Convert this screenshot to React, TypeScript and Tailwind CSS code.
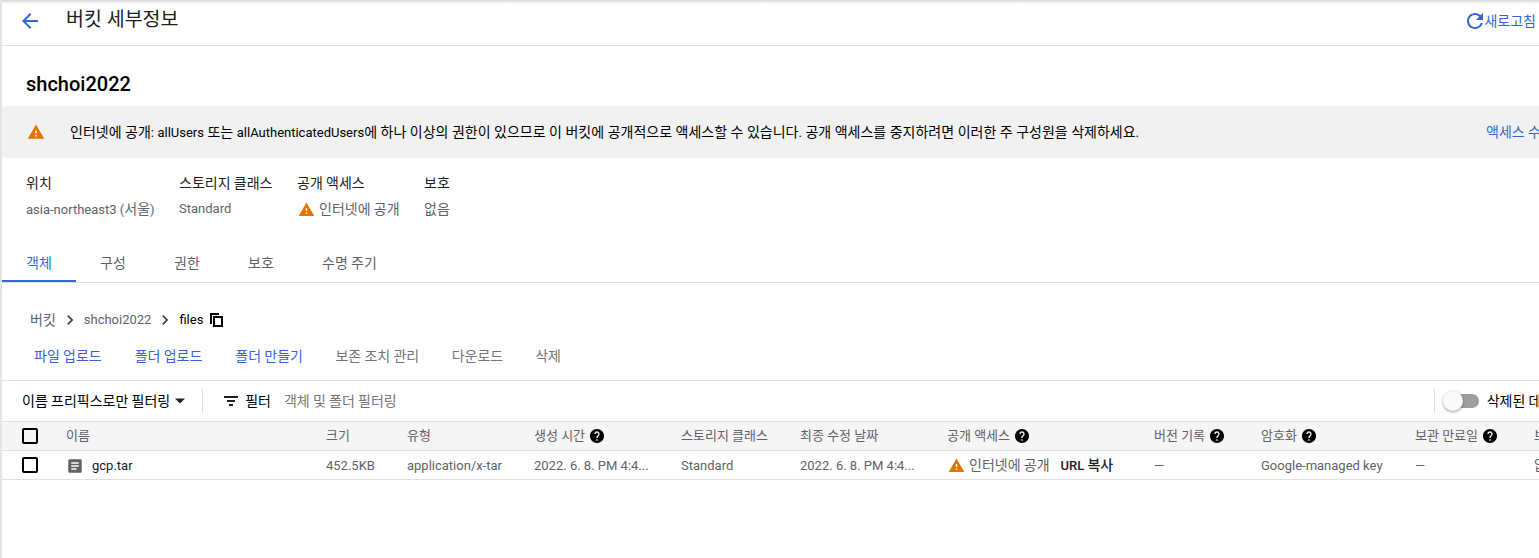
import type { ReactNode } from "react";

function T({ children }: { children: string }) {
  const parts = children.split(/([\uAC00-\uD7A3]+)/);
  return (
    <>
      {parts.map((p, i) => (i % 2 === 1 ? <span key={i} className="text-[14px]">{p}</span> : p))}
    </>
  );
}
function Warn({ size = 18 }: { size?: number }) {
  return (
    <svg width={size} height={size} viewBox="0 0 24 24" className="shrink-0">
      <path d="M1 21h22L12 2 1 21z" fill="#e37400" />
      <path d="M13 18h-2v-2h2v2zm0-4h-2v-4h2v4z" fill="#fff" />
    </svg>
  );
}
function Help() {
  return (
    <svg width="16" height="16" viewBox="0 0 24 24" className="shrink-0">
      <path d="M12 1.500C6.200 1.500 1.500 6.200 1.500 12S6.200 22.500 12 22.500 22.500 17.800 22.500 12 17.800 1.500 12 1.500zm1 17.500h-2v-2h2v2zm2.100-7.700-.9.900c-.8.800-1.200 1.400-1.200 2.800h-2v-.5c0-1.100.4-2.100 1.200-2.800l1.200-1.300c.4-.3.600-.8.600-1.400 0-1.100-.9-2-2-2s-2 .9-2 2H8c0-2.200 1.800-4 4-4s4 1.800 4 4c0 .9-.4 1.700-.9 2.300z" fill="#000" />
    </svg>
  );
}
function Chevron() {
  return (
    <svg width="20" height="20" viewBox="0 0 24 24" className="shrink-0">
      <path d="M8.600 16.600 13.200 12 8.600 7.400 10 6l6 6-6 6z" fill="#3c4043" />
    </svg>
  );
}
function Check() {
  return <span className="block w-[16px] h-[16px] border-2 border-black rounded-[2px] box-border" />;
}
function Info({ label, children, className }: { label: string; children: ReactNode; className: string }) {
  return (
    <div className={className}>
      <div className="leading-[18px] text-[#202124]"><T>{label}</T></div>
      <div className="mt-[7px] leading-[18px] text-[#5f6368] flex items-center">{children}</div>
    </div>
  );
}
export default function App() {
  return (
    <div className="relative w-[1539px] h-[558px] overflow-hidden bg-white border-l-2 border-[#e4e4e4] text-[13px] text-[#202124] font-['Roboto','Noto_Sans_CJK_KR',sans-serif]">
      <div className="absolute left-0 right-0 top-0 h-[4px] bg-gradient-to-b from-[#d8d8d8] to-white" />
      <header className="h-[46px] border-b border-[#e0e0e0] flex items-center pr-[3px]">
        <svg width="24" height="24" viewBox="0 0 24 24" className="ml-[16px] mt-[-3px]">
          <path d="M20 11H7.830l5.590-5.590L12 4l-8 8 8 8 1.410-1.410L7.830 13H20v-2z" fill="#3367d6" />
        </svg>
        <h1 className="ml-[24px] mt-[-6px] text-[19.5px] text-[#202124] font-normal">버킷 세부정보</h1>
        <button className="ml-auto flex items-center text-[#3367d6] mt-[-3px]">
          <svg width="20" height="20" viewBox="2 2 20 20">
            <path d="M17.650 6.350A7.958 7.958 0 0 0 12 4c-4.420 0-7.990 3.580-7.990 8s3.570 8 7.990 8c3.730 0 6.840-2.550 7.730-6h-2.080A5.990 5.990 0 0 1 12 18c-3.310 0-6-2.690-6-6s2.690-6 6-6c1.660 0 3.140.69 4.220 1.780L13 11h7V4l-2.350 2.350z" fill="#3367d6" />
          </svg>
          <span className="ml-[-1px]"><T>새로고침</T></span>
        </button>
      </header>
      <div className="h-[60px] pl-[24px] flex items-center pt-[15px]">
        <h2 className="text-[20px] font-medium text-[#000]">shchoi2022</h2>
      </div>
      <div className="h-[52px] bg-[#f1f1f1] rounded-l-[4px] flex items-center pl-[25px] text-[#000] whitespace-nowrap">
        <Warn />
        <span className="ml-[25px] [word-spacing:0.27px]"><T>인터넷에 공개: allUsers 또는 allAuthenticatedUsers에 하나 이상의 권한이 있으므로 이 버킷에 공개적으로 액세스할 수 있습니다. 공개 액세스를 중지하려면 이러한 주 구성원을 삭제하세요.</T></span>
        <a className="ml-auto shrink-0 w-[53px] overflow-hidden text-[#3367d6]"><T>액세스 수정</T></a>
      </div>
      <div className="flex pl-[24px] pt-[16px] h-[82px] whitespace-nowrap">
        <Info label="위치" className="w-[153px]"><span><T>asia-northeast3 (서울)</T></span></Info>
        <Info label="스토리지 클래스" className="w-[118px]">Standard</Info>
        <Info label="공개 액세스" className="w-[127px]">
          <span className="ml-[1px]"><Warn size={17} /></span><span className="ml-[4px]"><T>인터넷에 공개</T></span>
        </Info>
        <Info label="보호" className="w-[60px]"><T>없음</T></Info>
      </div>
      <nav className="h-[43px] border-b border-[#e0e0e0] flex text-[#5f6368]">
        {["객체", "구성", "권한", "보호", "수명 주기"].map((t, i) => (
          <div key={t} className={`flex items-center justify-center h-[42px] ${i === 4 ? "px-[24px]" : "w-[74px]"} ${i === 0 ? "text-[#3367d6] border-b-2 border-[#3367d6] pt-[6px]" : "pt-[4px]"}`}><span><T>{t}</T></span></div>
        ))}
      </nav>
      <div className="h-[37px] mt-[18px] flex items-center pl-[28px] pt-[1px] text-[#5f6368]">
        <T>버킷</T>
        <span className="mx-[4px]"><Chevron /></span>
        <span>shchoi2022</span>
        <span className="mx-[4px]"><Chevron /></span>
        <span className="text-[#000]">files</span>
        <svg width="13" height="14" viewBox="0 0 13 14" className="ml-[7px]">
          <path d="M1 11V1h8" fill="none" stroke="#000" strokeWidth="2" />
          <rect x="4" y="4" width="8" height="9" fill="none" stroke="#000" strokeWidth="2" />
        </svg>
      </div>
      <div className="h-[36px] flex items-center pl-[32px] whitespace-nowrap text-[#3367d6]">
        <span><T>파일 업로드</T></span>
        <span className="ml-[33px]"><T>폴더 업로드</T></span>
        <span className="ml-[33px]"><T>폴더 만들기</T></span>
        <span className="ml-[32.5px] text-[#757575]"><T>보존 조치 관리</T></span>
        <span className="ml-[32.5px] text-[#757575]"><T>다운로드</T></span>
        <span className="ml-[32px] text-[#757575]"><T>삭제</T></span>
      </div>
      <div className="h-[41px] mt-[6px] border-t border-[#e0e0e0] flex items-center whitespace-nowrap [&>*]:shrink-0">
        <span className="ml-[20px] text-[#000]"><T>이름 프리픽스로만 필터링</T></span>
        <svg width="12" height="12" viewBox="0 0 12 12" className="ml-[4px]"><path d="M1 3.500h10L6 8.500z" fill="#202124" /></svg>
        <span className="ml-[16px] w-px h-[24px] bg-[#e0e0e0]" />
        <svg width="14" height="10" viewBox="0 0 14 10" className="ml-[21px]">
          <path d="M0 0h14v2H0zM3 4h8v2H3zM5 8h4v2H5z" fill="#202124" />
        </svg>
        <span className="ml-[7px] text-[#000]"><T>필터</T></span>
        <span className="ml-[13px] text-[#757575]"><T>객체 및 폴더 필터링</T></span>
        <span className="ml-[1037px] w-px h-[24px] bg-[#e0e0e0]" />
        <span className="relative ml-[12px] w-[32px] h-[14px] rounded-full bg-[#9e9e9e]">
          <span className="absolute left-[-4px] top-[-3px] w-[20px] h-[20px] rounded-full bg-[#fafafa] shadow-[0_1px_3px_rgba(0,0,0,0.4)]" />
        </span>
        <span className="ml-[8px] text-[#000]"><T>삭제된 데이터 표시</T></span>
      </div>
      <div className="w-[1700px] grid grid-cols-[64px_260px_81px_127px_147px_119px_147px_207px_107px_154px_119px_200px] text-[#5f6368] whitespace-nowrap">
        {["", "이름", "크기", "유형", "생성 시간", "스토리지 클래스", "최종 수정 날짜", "공개 액세스", "버전 기록", "암호화", "보관 만료일", "보호"].map((t, i) => (
          <div key={i} className={`h-[30px] bg-[#f5f5f5] border-y border-[#e0e0e0] flex items-center gap-[4px] ${i === 0 ? "pl-[20px]" : ""}`}>
            {i === 0 ? <Check /> : <span>{t}</span>}
            {[4, 7, 8, 9, 10].includes(i) && <Help />}
          </div>
        ))}
        <div className="h-[29px] border-b border-[#e0e0e0] flex items-center pl-[20px]"><Check /></div>
        <div className="h-[29px] border-b border-[#e0e0e0] flex items-center pt-[1px] text-[#202124]">
          <svg width="18" height="18" viewBox="0 0 24 24"><path d="M19 3H5c-1.100 0-2 .9-2 2v14c0 1.100.9 2 2 2h14c1.100 0 2-.9 2-2V5c0-1.100-.9-2-2-2zm-5 14H7v-2h7v2zm3-4H7v-2h10v2zm0-4H7V7h10v2z" fill="#5f6368" /></svg>
          <span className="ml-[8px]">gcp.tar</span>
        </div>
        {["452.5KB", "application/x-tar", "2022. 6. 8. PM 4:4...", "Standard", "2022. 6. 8. PM 4:4..."].map((t, i) => (
          <div key={i} className="h-[29px] border-b border-[#e0e0e0] flex items-center pt-[1px]">{t}</div>
        ))}
        <div className="h-[29px] border-b border-[#e0e0e0] flex items-center pt-[1px] pl-[1px]">
          <Warn size={17} /><span className="ml-[4px]"><T>인터넷에 공개</T></span>
          <span className="ml-[11px] text-[#202124] font-medium"><T>URL 복사</T></span>
        </div>
        {["—", "Google-managed key", "—", "없음"].map((t, i) => (
          <div key={i} className="h-[29px] border-b border-[#e0e0e0] flex items-center pt-[1px]"><span><T>{t}</T></span></div>
        ))}
      </div>
    </div>
  );
}
